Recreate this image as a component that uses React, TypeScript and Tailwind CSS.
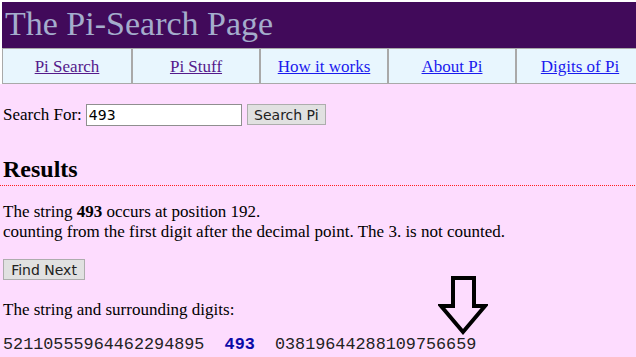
const serif = "font-['Times_New_Roman','Liberation_Serif',serif]"
const mono = "font-['Courier_New','Liberation_Mono',monospace]"
const ui = "font-['Tahoma','DejaVu_Sans','Liberation_Sans',sans-serif]"

const links = [
  { label: "Pi Search", visited: true },
  { label: "Pi Stuff", visited: true },
  { label: "How it works", visited: false },
  { label: "About Pi", visited: false },
  { label: "Digits of Pi", visited: false },
]

function DownArrow() {
  return (
    <svg
      className="absolute left-[438px] top-[274px]"
      width="50"
      height="62"
      viewBox="0 0 50 62"
    >
      <polygon
        points="15,4 36,4 36,32 47,32 25,58 3,32 15,32"
        fill="none"
        stroke="#000"
        strokeWidth="4"
        strokeLinejoin="miter"
      />
    </svg>
  )
}

export default function App() {
  return (
    <div className={`relative min-h-[357px] w-[636px] overflow-hidden bg-[#fddcfe] text-black ${serif}`}>
      <div className="w-[644px] bg-white pl-[2px] pt-[2px]">
        <div className="flex h-[46px] items-center bg-[#410a5a] pl-[3px]">
          <h1 className="pb-[2px] text-[34px] leading-none text-[#a4adcc]">The Pi-Search Page</h1>
        </div>
        <nav className="grid h-[36px] grid-cols-5 border border-[#a9a9a9] bg-[#e8f6fe]">
          {links.map((l, i) => (
            <div
              key={l.label}
              className={`flex items-center justify-center pt-[2px] text-[17px] ${i > 0 ? "border-l-2 border-[#a9a9a9]" : ""}`}
            >
              <a
                href="#"
                className={`underline ${l.visited ? "text-[#551a8b]" : "text-[#1a1aee]"}`}
              >
                {l.label}
              </a>
            </div>
          ))}
        </nav>
      </div>

      <div className="px-[3px]">
        <form className="mt-[18px] flex items-center text-[17px]">
          <span>Search For:</span>
          <input
            defaultValue="493"
            className={`ml-[4px] h-[22px] w-[156px] border border-[#8f8f8f] bg-white px-[2px] text-[14px] ${ui}`}
          />
          <button
            type="button"
            className={`ml-[5px] h-[21px] w-[79px] border border-[#adadad] bg-[#e1e1e1] text-[14px] text-[#222] ${ui}`}
          >
            Search Pi
          </button>
        </form>

        <h2 className="mt-[27px] text-[24px] font-bold leading-[28px]">Results</h2>
      </div>
      <div className="mt-[2px] h-[1px] bg-[repeating-linear-gradient(90deg,#ff1f1f_0_1px,transparent_1px_2px)]" />

      <div className="px-[3px]">
        <p className="mt-[16px] text-[17px] leading-[20px]">
          The string <b>493</b> occurs at position 192.
          <br />
          counting from the first digit after the decimal point. The 3. is not counted.
        </p>

        <button
          type="button"
          className={`mt-[17px] h-[21px] w-[82px] border border-[#adadad] bg-[#e1e1e1] text-[14px] text-[#222] ${ui}`}
        >
          Find Next
        </button>

        <p className="mt-[18px] text-[17px] leading-[20px]">The string and surrounding digits:</p>

        <p className={`mt-[15px] whitespace-pre text-[16.8px] leading-[20px] text-[#222] ${mono}`}>
          {"52110555964462294895  "}
          <b className="text-[#0a0aa8]">493</b>
          {"  03819644288109756659"}
        </p>
      </div>

      <DownArrow />
    </div>
  )
}
